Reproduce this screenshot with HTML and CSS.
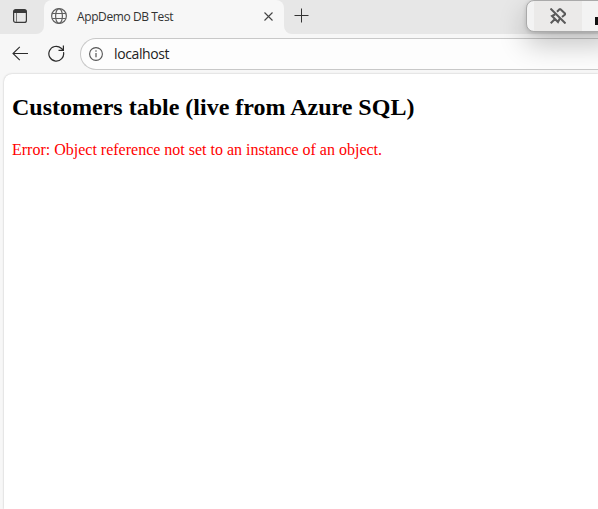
FILE: index.html
```html
<!DOCTYPE html>
<html lang="en">
<head>
<meta charset="utf-8">
<title>AppDemo DB Test</title>
<link rel="stylesheet" href="styles.css">
</head>
<body>
<div class="browser">
  <div class="tabs">
    <div class="tab-actions">
      <svg width="14" height="14" viewBox="0 0 14 14"><rect x=".6" y=".6" width="12.8" height="12.8" rx="2" fill="none" stroke="#3a3a3a" stroke-width="1.2"/><path d="M1 1h12v3H1z" fill="#3a3a3a"/><path d="M3.500 4v9" stroke="#777"/></svg>
    </div>
    <div class="tab">
      <svg class="globe" width="16" height="16" viewBox="0 0 16 16" fill="none" stroke="#606060" stroke-width="1.2"><circle cx="8" cy="8" r="7.4"/><ellipse cx="8" cy="8" rx="3.4" ry="7.4"/><path d="M1.2 5.500h13.6M1.2 10.500h13.6"/></svg>
      <span class="tab-title">AppDemo DB Test</span>
      <svg class="close" width="9" height="9" viewBox="0 0 9 9" stroke="#444" stroke-width="1.1"><path d="M.5.5l8 8M8.5.5l-8 8"/></svg>
    </div>
    <div class="new-tab">
      <svg width="15" height="15" viewBox="0 0 15 15" stroke="#333"><path d="M7.5.5v14M.5 7.5h14"/></svg>
    </div>
  </div>
  <div class="toolbar">
    <svg class="back" width="17" height="15" viewBox="0 0 17 15" fill="none" stroke="#2b2b2b" stroke-width="1.1"><path d="M16 7.5H1M7.8.8L1 7.5l6.8 6.7"/></svg>
    <svg class="reload" width="17" height="17" viewBox="0 0 17 17" fill="none" stroke="#2b2b2b" stroke-width="1.2"><path d="M15.500 7.200A7.4 7.4 0 1 1 13.200 3.200L15 5M15.400 .5v4.900h-4.900"/></svg>
    <div class="address">
      <svg width="14" height="14" viewBox="0 0 14 14" fill="none" stroke="#555" stroke-width="1.1"><circle cx="7" cy="7" r="6.4"/><path d="M7 6v4.2" stroke-width="1.2"/><circle cx="7" cy="4" r=".8" fill="#555" stroke="none"/></svg>
      <span>localhost</span>
    </div>
  </div>
  <main class="page">
    <h2>Customers table (live from Azure SQL)</h2>
    <p class="error">Error: Object reference not set to an instance of an object.</p>
  </main>
</div>
<div class="float-bar">
  <div class="pin">
    <svg width="16" height="16" viewBox="0 0 16 16" fill="none" stroke="#5a5a5a" stroke-width="2"><path d="M.5.5l15 15M.7 15.300L5 11M7 3.800L9.500 1.200h1l4.500 4.300v1l-3 2.500M5 6.500L2 8l6 6 1.800-3.500"/></svg>
  </div>
  <div class="signal"></div>
</div>
</body>
</html>
```

FILE: styles.css
```css
* { box-sizing: border-box; }
html, body { margin: 0; height: 100%; overflow: hidden; }
svg { display: block; flex: none; }
.browser { height: 100%; display: flex; flex-direction: column; background: #f7f7f7; }
.tabs { display: flex; height: 34px; flex: none; background: linear-gradient(#e7e7e7 50%, #f7f7f7 50%); }
.tab-actions { width: 44px; background: #e7e7e7; border-bottom-right-radius: 8px; padding: 9px 0 0 13px; }
.tab { width: 240px; height: 34px; background: #f7f7f7; border-radius: 8px 8px 0 0; display: flex; align-items: center; padding: 0 11px 2px 7px; }
.tab-title { flex: 1; margin-left: 10px; font: 12px "Open Sans", sans-serif; letter-spacing: -.4px; color: #333; white-space: nowrap; }
.new-tab { flex: 1; background: #e7e7e7; border-bottom-left-radius: 8px; padding: 8px 0 0 10px; }
.toolbar { height: 40px; flex: none; display: flex; align-items: center; padding-left: 12px; }
.back { margin-bottom: 2px; }
.reload { margin: 0 0 1px 19px; }
.address { flex: 1; height: 32px; margin-left: 15px; border: 1px solid #c8c8c8; border-right: 0; border-radius: 16px 0 0 16px; background: #fdfdfd; display: flex; align-items: center; padding-left: 8px; font: 14px "Open Sans", sans-serif; letter-spacing: -.38px; color: #222; }
.address span { margin: 0 0 1px 11px; }
.page { flex: 1; margin-left: 4px; padding: 0 8px; background: #fff; border-top-left-radius: 8px; box-shadow: 0 0 2px rgba(0, 0, 0, .25); font-family: "Liberation Serif", serif; }
h2 { margin: 20px 0; font-size: 24px; line-height: 27px; white-space: nowrap; }
.error { margin: 0; font-size: 16px; line-height: 18px; color: #f00; white-space: nowrap; }
.float-bar { position: absolute; left: 526px; top: 0; width: 90px; height: 32px; background: #f3f3f3; border: 1px solid #aaa; border-radius: 8px; box-shadow: 0 12px 28px rgba(0, 0, 0, .24), 0 1px 4px rgba(0, 0, 0, .15); display: flex; overflow: hidden; }
.pin { width: 48px; margin-left: 7px; background: #ebeae9; padding: 7px 0 0 16px; }
.signal { width: 20px; height: 8px; margin: 16px 0 0 13px; background: #111; }
```
